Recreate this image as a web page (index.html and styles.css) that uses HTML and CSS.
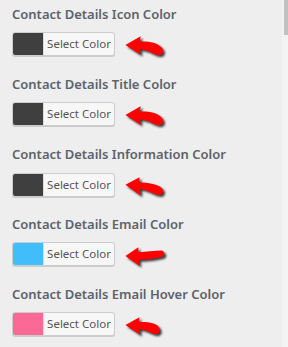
FILE: index.html
```html
<!DOCTYPE html>
<html lang="en">
<head>
    <meta charset="UTF-8">
    <meta name="viewport" content="width=device-width, initial-scale=1.0">
    <title>Contact Details Colors</title>
    <link rel="stylesheet" href="styles.css">
</head>
<body>

    <!-- Icon color -->
    <div class="setting">
        <div class="setting-title">Contact Details Icon Color</div>
        <div class="picker-row">
            <button class="picker"><span class="swatch swatch-dark"></span><span class="picker-label">Select Color</span></button>
            <svg class="arrow" width="48" height="26" viewBox="0 0 44 24"><path d="M3 11 L17 3 L16.5 8 C24 7.5 32 9 36 13 C39 16 38 20.5 34 20.5 C29 20.5 25 15.5 16.5 15 L17 20 Z" fill="#f00"/></svg>
        </div>
    </div>

    <!-- Title color -->
    <div class="setting">
        <div class="setting-title">Contact Details Title Color</div>
        <div class="picker-row">
            <button class="picker"><span class="swatch swatch-dark"></span><span class="picker-label">Select Color</span></button>
            <svg class="arrow" width="48" height="26" viewBox="0 0 44 24"><path d="M3 11 L17 3 L16.5 8 C24 7.5 32 9 36 13 C39 16 38 20.5 34 20.5 C29 20.5 25 15.5 16.5 15 L17 20 Z" fill="#f00"/></svg>
        </div>
    </div>

    <!-- Information color -->
    <div class="setting">
        <div class="setting-title">Contact Details Information Color</div>
        <div class="picker-row">
            <button class="picker"><span class="swatch swatch-dark"></span><span class="picker-label">Select Color</span></button>
            <svg class="arrow arrow-low" width="48" height="26" viewBox="0 0 44 24"><path d="M3 9 L16 2 L16 7 C24 7 32 8.5 36 11.5 C39 14 38 18.5 34 18.5 C29 18.5 25 14 16.5 13 L17 19 Z" fill="#f00"/></svg>
        </div>
    </div>

    <!-- Email color -->
    <div class="setting">
        <div class="setting-title">Contact Details Email Color</div>
        <div class="picker-row">
            <button class="picker"><span class="swatch swatch-blue"></span><span class="picker-label">Select Color</span></button>
            <svg class="arrow" width="48" height="26" viewBox="0 0 44 24"><path d="M3 12 L15 4 L15 8.5 C22 8.5 30 7 36 7 C39.5 7 40 12 36.5 13 C31 14.5 23 15.5 15.5 15.5 L16 21 Z" fill="#f00"/></svg>
        </div>
    </div>

    <!-- Email hover color -->
    <div class="setting">
        <div class="setting-title">Contact Details Email Hover Color</div>
        <div class="picker-row">
            <button class="picker"><span class="swatch swatch-pink"></span><span class="picker-label">Select Color</span></button>
            <svg class="arrow" width="48" height="26" viewBox="0 0 44 24"><path d="M3 11 L16 4 L15.5 8.5 C22 8 30 9 33 12 C36 15 35 19.5 31 19.5 C27 19.5 23 15.5 16 15 L16.5 20 Z" fill="#f00"/></svg>
        </div>
    </div>

    <div class="scrollbar"><div class="scrollbar-thumb"></div></div>

</body>
</html>
```

FILE: styles.css
```css
/* Customizer-like panel */
body {
    font-family: "Noto Sans", "Open Sans", sans-serif;
    background-color: #eeeeee;
    margin: 0;
    padding: 0 12px;
    height: 347px;
    overflow: hidden;
}
.setting {
    height: 70px;
    padding-top: 4px;
    box-sizing: border-box;
}
.setting-title {
    font-size: 13px;
    line-height: 20px;
    font-weight: 600;
    color: #5b636b;
    margin-bottom: 5px;
}
.picker-row {
    display: flex;
    align-items: center;
    gap: 7px;
}
.picker {
    display: flex;
    align-items: stretch;
    height: 24px;
    width: 103px;
    padding: 0;
    border: 1px solid #cccccc;
    border-radius: 3px;
    background-color: #f7f7f7;
    box-shadow: 0 1px 0 #cccccc;
    overflow: hidden;
    box-sizing: border-box;
    font-family: inherit;
}
.swatch {
    width: 30px;
    flex: none;
}
.swatch-dark {
    background-color: #3f3f3f;
}
.swatch-blue {
    background-color: #41bdfb;
}
.swatch-pink {
    background-color: #fb6a97;
}
.picker-label {
    flex: 1;
    border-left: 1px solid #dddddd;
    font-size: 11.5px;
    line-height: 22px;
    color: #555555;
    text-align: center;
}
.arrow {
    margin-top: 4px;
    filter: drop-shadow(2px 2px 1px rgba(0, 0, 0, 0.75));
}
.arrow-low {
    margin-top: 6px;
}
.scrollbar {
    position: fixed;
    top: 0;
    right: 0;
    width: 6px;
    height: 100%;
    background-color: #f3f3f3;
}
.scrollbar-thumb {
    margin-left: 2px;
    width: 4px;
    height: 35px;
    background-color: #c1c1c1;
}
```
